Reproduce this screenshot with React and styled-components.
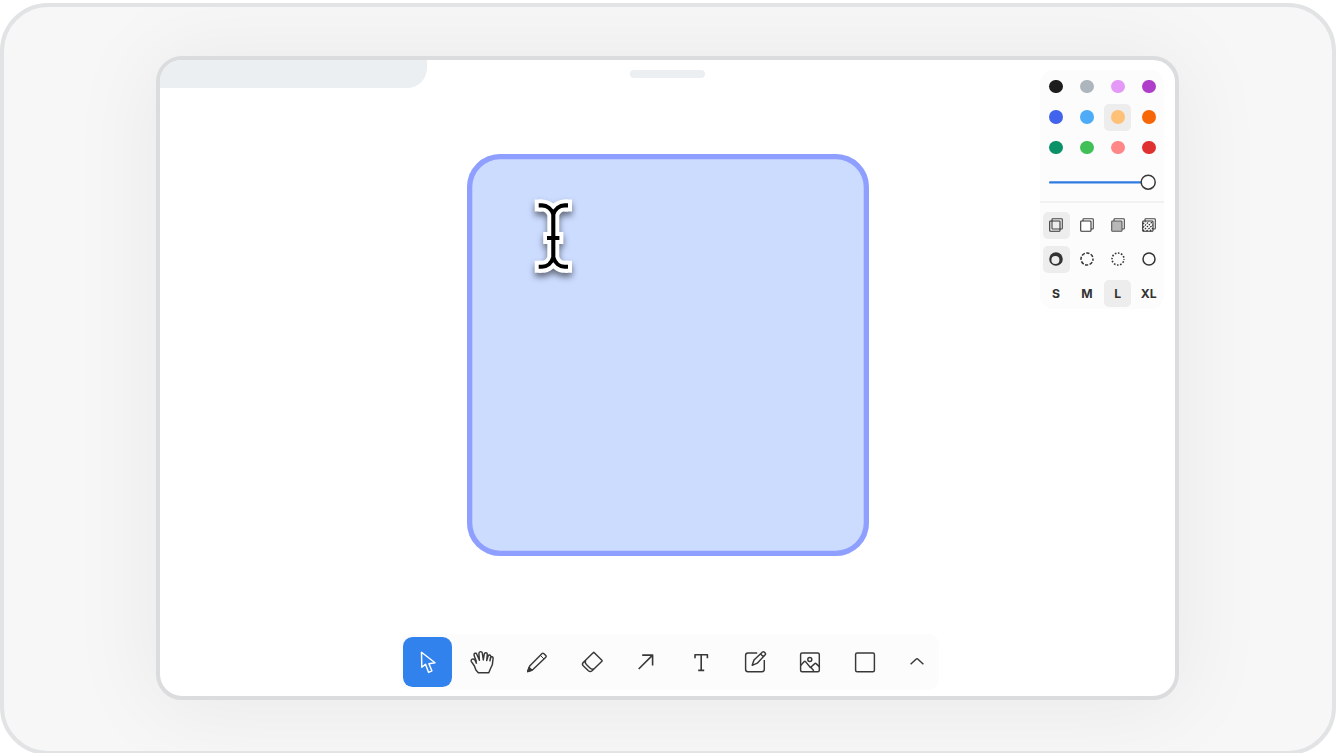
import React from "react";
import styled, { createGlobalStyle } from "styled-components";

const GlobalStyle = createGlobalStyle`
  *, *::before, *::after { box-sizing: border-box; }
  html, body { margin: 0; height: 100%; background: #fff; overflow: hidden; }
  body { font-family: Inter, "Liberation Sans", sans-serif; }
  button { font: inherit; color: inherit; border: 0; padding: 0; }
  svg { display: block; flex: none; }
`;

const Page = styled.main`
  width: 1336px;
  height: 753px;
  padding-top: 3px;
  overflow: hidden;
`;

const Frame = styled.section`
  height: 752px;
  border: 4px solid #e2e3e4;
  border-radius: 48px;
  background: #f7f7f7;
  padding: 49px 153px 0 152px;
  overflow: hidden;
`;

const Screen = styled.div`
  display: grid;
  grid-template-columns: 306.5px 402px 1fr;
  grid-template-rows: 93.5px 402px 1fr;
  height: 644px;
  border: 4px solid #dbdcde;
  border-radius: 26px;
  background: #fff;
  box-shadow: 0 4px 90px 6px rgba(0, 0, 0, 0.06);
`;

const CornerTab = styled.div`
  grid-area: 1 / 1;
  width: 267.3px;
  height: 28.3px;
  background: #ebeff2;
  border-radius: 21px 0 20px 0;
`;

const Grabber = styled.div`
  grid-area: 1 / 2;
  justify-self: start;
  width: 75px;
  height: 7.6px;
  margin: 10.3px 0 0 163.5px;
  border-radius: 4px;
  background: #ebeff2;
`;

const NoteCard = styled.div`
  grid-area: 2 / 2;
  border-radius: 33px;
  background: #ccdcff;
  box-shadow: inset 0 0 0 5.3px #8f9fff;
  padding: 36.4px 0 0 63.2px;
`;

const Caret = styled.svg`
  overflow: visible;
  filter: drop-shadow(0 4px 3px rgba(0, 0, 0, 0.5));
`;

const StylePanel = styled.aside`
  grid-area: 1 / 3 / 3 / 4;
  justify-self: end;
  width: 124.5px;
  height: 238.5px;
  margin: 10px 11px 0 0;
  background: #fcfcfc;
  border-radius: 14px;
`;

const OptionGrid = styled.div`
  display: grid;
  grid-template-columns: repeat(4, 27px);
  grid-auto-rows: 27px;
  column-gap: 3.9px;
  row-gap: ${(p) => p.$rowGap}px;
  padding: ${(p) => p.$top}px 0 0 3px;
`;

const Option = styled.button`
  display: flex;
  align-items: center;
  justify-content: center;
  border-radius: 5px;
  background: ${(p) => (p.$active ? "#ededed" : "transparent")};
  color: #333;
  font-size: 12.2px;
  font-weight: 700;
  line-height: 27px;
`;

const Swatch = styled.span`
  width: 13.8px;
  height: 13.8px;
  border-radius: 50%;
  background: ${(p) => p.$color};
`;

const Slider = styled.div`
  display: flex;
  align-items: center;
  height: 15px;
  margin: 13.8px 8.2px 0 9.5px;
`;

const SliderFill = styled.svg`
  flex: 1;
  min-width: 0;
`;

const SliderThumb = styled.svg`
  margin-left: -1px;
`;

const Divider = styled.div`
  height: 2px;
  margin-top: 11.4px;
  background: #f1f1f1;
`;

const Toolbar = styled.nav`
  grid-area: 3 / 1 / 4 / 4;
  align-self: end;
  display: flex;
  align-items: center;
  gap: 4.75px;
  width: 539px;
  height: 56px;
  margin: 0 0 5.8px 239.5px;
  padding-left: 3px;
  border-radius: 11px;
  background: #fcfcfc;
`;

const ToolButton = styled.button`
  display: flex;
  align-items: center;
  justify-content: center;
  width: ${(p) => (p.$narrow ? 45 : 50)}px;
  height: 50px;
  border-radius: 9.5px;
  background: ${(p) => (p.$active ? "#3182ed" : "transparent")};
  color: ${(p) => (p.$active ? "#fff" : "#383838")};
`;

const swatches = [
  ["black", "#1d1d1d"], ["grey", "#adb5bd"], ["light violet", "#e599f7"], ["violet", "#ae3ec9"],
  ["blue", "#4263eb"], ["light blue", "#4dabf7"], ["yellow", "#ffc078"], ["orange", "#f76707"],
  ["green", "#099268"], ["light green", "#40c057"], ["light red", "#ff8787"], ["red", "#e03131"],
];

const toolIcons = {
  select: <path d="M8.5 4.8 8.8 19.9 12.5 16.9 15.6 25 18.9 23.4 15.9 16.3 22 15.4Z" />,
  hand: (
    <path d="M9.6 16.4 8.2 13C7.5 11.8 6.4 11.2 5.2 11.7 4.1 12.2 3.9 13.2 4.4 14.2L7.4 18.6 8.9 22.6 11.3 25.3H21.8L23.2 21.8 25.3 17.4 26.1 10.9C26.2 9.2 24.2 8.7 23.7 10.2L22.8 14M9.5 14.4 7.1 8.2C6.4 5.8 8.9 4.8 9.8 6.9L12.4 12.9 11.9 6C11.9 3.9 14.8 3.6 15.3 5.6L16.3 12.5 17.3 6.6C17.8 4.8 20.5 5.1 20.3 7.1L19.7 13.1 21.1 8.6C21.8 7 23.9 7.5 23.7 9.3L22.8 14" />
  ),
  draw: (
    <>
      <path d="M5.7 24.2 7.7 18.5 20.1 6.1C20.6 5.6 21.2 5.6 21.7 6.1L23.8 8.2C24.3 8.7 24.3 9.3 23.8 9.8L11.2 21.9Z" />
      <path d="M18.3 7.9 21.9 11.5" strokeWidth="1" />
      <path d="m5.7 24.2 1.4-4.2 2.9 2.8Z" fill="currentColor" />
    </>
  ),
  eraser: (
    <path d="M15.9 5.6 16.8 4.8 25.1 13.1Q25.3 13.5 24.9 13.9L15.1 23.4Q13.2 25 11.4 23.4L6.2 18.4Q4.7 16.8 6.2 15.1ZM8.6 13Q7.6 15.3 9.4 17.2L12.7 20.4Q14.7 22.3 16.4 21.6" />
  ),
  arrow: <path d="M7.7 21.6 21.6 7.7M11.2 7.7H21.6V18.2" strokeWidth="1.6" />,
  text: <path d="M9 10.8V7.3H21.4V10.8M15.2 7.3V23M12.2 23H18.2" strokeWidth="1.6" />,
  note: (
    <>
      <path d="M17.2 5.6H8Q5.6 5.6 5.6 8V21.8Q5.6 24.3 8 24.3H21.8Q24.3 24.3 24.3 21.8V12.5" />
      <path d="M12.2 17.9 14 12.7 22.5 4.6Q23.4 3.9 24.2 4.6L25.2 5.6Q25.9 6.4 25.2 7.3L17.3 15.8Z M20.6 6.5 23.4 9.3" />
    </>
  ),
  image: (
    <>
      <rect x="5.6" y="5.6" width="18.7" height="18.7" rx="1.5" />
      <circle cx="14.8" cy="12" r="2" />
      <path d="M5.6 18.1 9.3 14.1Q10 13.6 10.5 14.2L15.4 20.1 19.8 16.2Q20.5 15.6 21.1 16.2L24.3 19.2M16.4 19.4Q16.2 21 17.4 21.8 18.6 22.7 18.6 24.3" />
    </>
  ),
  rectangle: <rect x="5.6" y="5.6" width="18.8" height="18.8" rx="1.5" />,
  more: <path d="M8.6 16.9 14 11.8Q15 11 16 11.8L21.4 16.9" />,
};

const backSheet = <rect x="3" y=".7" width="10.3" height="10.3" rx=".8" stroke="#444" />;

const fillIcons = {
  none: <>{backSheet}<rect x=".7" y="3" width="10.3" height="10.3" rx=".8" /></>,
  semi: <>{backSheet}<rect x=".7" y="3" width="10.3" height="10.3" rx=".8" fill="#fff" /></>,
  solid: <>{backSheet}<rect x=".7" y="3" width="10.3" height="10.3" rx=".8" fill="#b8b8b8" stroke="#555" /></>,
  pattern: (
    <>
      {backSheet}
      <rect x=".7" y="3" width="10.3" height="10.3" rx=".8" fill="#fff" />
      <path d="m1 6 2.5-2.5M1 9.5 7 3.5M1 13 10.5 3.5M4.5 13 10.8 6.8M8 13 10.8 10.2" strokeDasharray="1.7 1" strokeWidth="1.2" />
    </>
  ),
};

const dashIcons = {
  draw: (
    <path
      d="M7 .2a6.8 6.8 0 1 1 0 13.6A6.8 6.8 0 0 1 7 .2ZM6.4 4.1a4 4 0 1 0 0 8 4 4 0 0 0 0-8Z"
      fill="currentColor"
      fillRule="evenodd"
      stroke="none"
    />
  ),
  dashed: <circle cx="7" cy="7" r="6" strokeWidth="1.5" strokeDasharray="3.3 1.41" strokeDashoffset="1.5" />,
  dotted: <circle cx="7" cy="7" r="6" strokeWidth="1.6" strokeDasharray="1.6 1.54" strokeDashoffset=".8" />,
  solid: <circle cx="7" cy="7" r="6" strokeWidth="1.5" />,
};

function ToolIcon({ name }) {
  return (
    <svg width="31" height="31" viewBox="-1 -.4 31 31" fill="none" stroke="currentColor" strokeWidth="1.45" strokeLinejoin="round">
      {toolIcons[name]}
    </svg>
  );
}

function SmallIcon({ children }) {
  return (
    <svg width="14" height="14" viewBox="0 0 14 14" fill="none" stroke="currentColor" strokeWidth="1.1">
      {children}
    </svg>
  );
}

function TextCursor() {
  const arms =
    "M8.7 15H12C17 15 21.6 18.4 23.3 24V67C21.6 72.8 17 76.4 12 76.4H8.7M38 15H34.6C29.6 15 25 18.4 23.3 24M23.3 67C25 72.8 29.6 76.4 34.6 76.4H38";
  return (
    <Caret width="47" height="90" viewBox="0 -.4 47 90" fill="none">
      <path d={arms} stroke="#fff" strokeWidth="12" />
      <path d="M4.7 15H12M42 15H34.6M4.7 76.4H12M42 76.4H34.6M13.2 47.6H33.4" stroke="#fff" strokeWidth="12" />
      <path d={arms} stroke="#000" strokeWidth="4.1" />
      <path d="M17 47.6H29.4" stroke="#000" strokeWidth="4" />
    </Caret>
  );
}

export default function App() {
  return (
    <>
      <GlobalStyle />
      <Page>
        <Frame>
          <Screen>
            <CornerTab />
            <Grabber />
            <NoteCard><TextCursor /></NoteCard>
            <StylePanel>
              <OptionGrid $top={3} $rowGap={3.5}>
                {swatches.map(([name, color]) => (
                  <Option key={name} aria-label={name} $active={name === "yellow"}>
                    <Swatch $color={color} />
                  </Option>
                ))}
              </OptionGrid>
              <Slider>
                <SliderFill height="16">
                  <line x1="1.2" x2="100%" y1="8.4" y2="8.4" stroke="#2f7be0" strokeWidth="2.4" strokeLinecap="round" />
                </SliderFill>
                <SliderThumb width="16" height="16" viewBox="0 0 16 16">
                  <circle cx="8.2" cy="8.2" r="7" fill="#fff" stroke="#3a3a3a" strokeWidth="1.5" />
                </SliderThumb>
              </Slider>
              <Divider />
              <OptionGrid $top={8.6} $rowGap={7}>
                {Object.entries(fillIcons).map(([name, icon]) => (
                  <Option key={name} aria-label={`${name} fill`} $active={name === "none"}>
                    <SmallIcon>{icon}</SmallIcon>
                  </Option>
                ))}
                {Object.entries(dashIcons).map(([name, icon]) => (
                  <Option key={name} aria-label={`${name} line`} $active={name === "draw"}>
                    <SmallIcon>{icon}</SmallIcon>
                  </Option>
                ))}
                {["S", "M", "L", "XL"].map((size) => (
                  <Option key={size} $active={size === "L"}>{size}</Option>
                ))}
              </OptionGrid>
            </StylePanel>
            <Toolbar>
              {Object.keys(toolIcons).map((name) => (
                <ToolButton key={name} aria-label={name} $active={name === "select"} $narrow={name === "more"}>
                  <ToolIcon name={name} />
                </ToolButton>
              ))}
            </Toolbar>
          </Screen>
        </Frame>
      </Page>
    </>
  );
}
